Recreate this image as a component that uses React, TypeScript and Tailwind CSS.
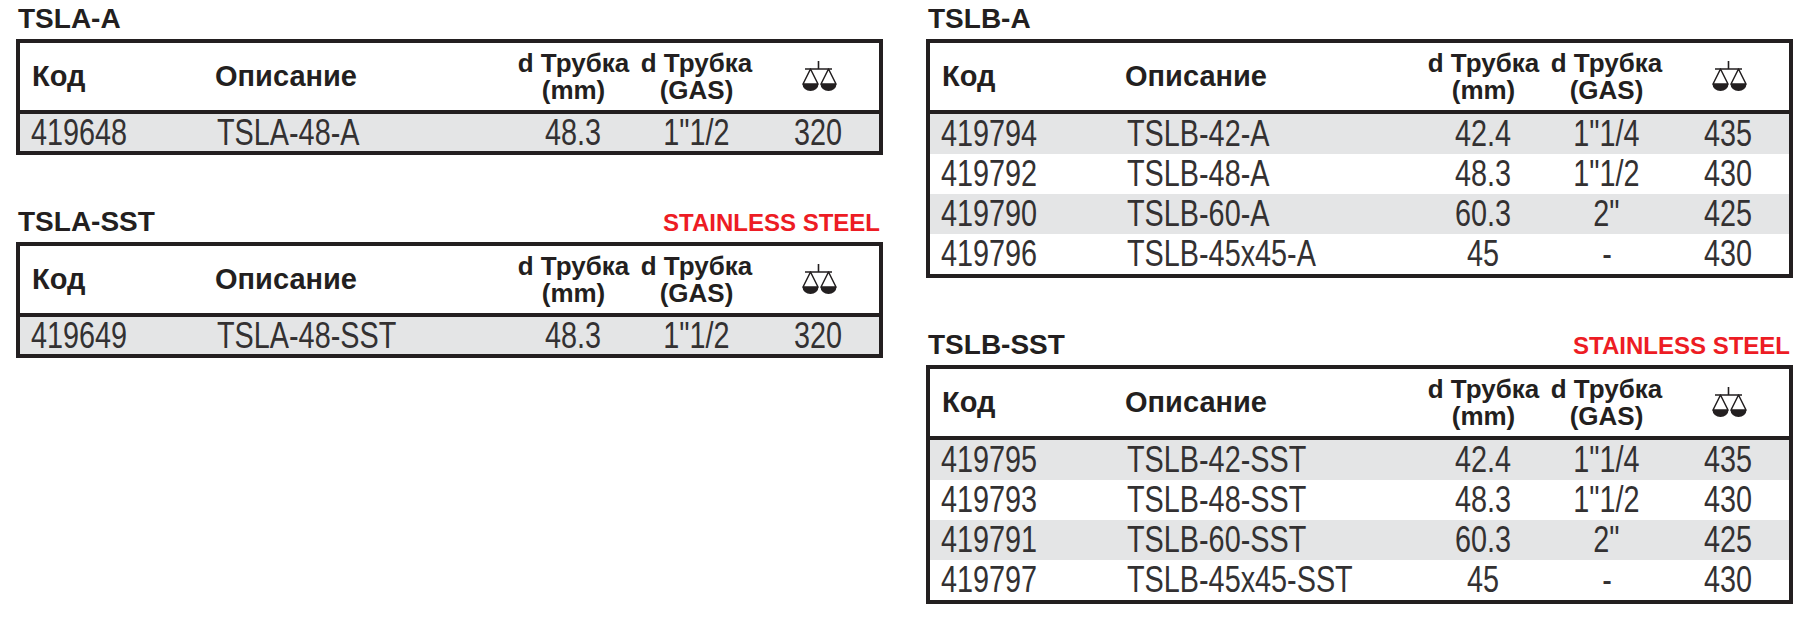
type Row = [string, string, string, string, string];

const tslaA: Row[] = [["419648", "TSLA-48-A", "48.3", "1\"1/2", "320"]];
const tslaSst: Row[] = [["419649", "TSLA-48-SST", "48.3", "1\"1/2", "320"]];
const tslbA: Row[] = [
  ["419794", "TSLB-42-A", "42.4", "1\"1/4", "435"],
  ["419792", "TSLB-48-A", "48.3", "1\"1/2", "430"],
  ["419790", "TSLB-60-A", "60.3", "2\"", "425"],
  ["419796", "TSLB-45x45-A", "45", "-", "430"],
];
const tslbSst: Row[] = [
  ["419795", "TSLB-42-SST", "42.4", "1\"1/4", "435"],
  ["419793", "TSLB-48-SST", "48.3", "1\"1/2", "430"],
  ["419791", "TSLB-60-SST", "60.3", "2\"", "425"],
  ["419797", "TSLB-45x45-SST", "45", "-", "430"],
];

const cols = "grid grid-cols-[183px_309px_123px_123px_121px]";

// condensed look: the catalogue face is narrow, so squeeze Liberation Sans
function Cell({ children, center }: { children: string; center?: boolean }) {
  return (
    <span
      className={`inline-block whitespace-nowrap scale-x-[0.8] ${
        center ? "origin-center" : "origin-left"
      }`}
    >
      {children}
    </span>
  );
}

function ScaleIcon() {
  return (
    <svg width="35" height="31" viewBox="0 0 35 31" fill="none">
      <path d="M16.5 0V8M3 8H30" stroke="#231f20" strokeWidth="1.6" />
      <path d="M8.5 8L1 23H16Z" stroke="#231f20" strokeWidth="1.5" strokeLinejoin="round" />
      <path d="M26.5 8L19 23H34Z" stroke="#231f20" strokeWidth="1.5" strokeLinejoin="round" />
      <path d="M0.5 23H16.5A8 7 0 0 1 0.5 23Z" fill="#231f20" />
      <path d="M18.5 23H34.5A8 7 0 0 1 18.5 23Z" fill="#231f20" />
    </svg>
  );
}

function PriceTable({ rows, rowH }: { rows: Row[]; rowH: string }) {
  return (
    <div className="border-[4px] border-[#231f20]">
      <div className={`${cols} h-[67px] items-center text-[#231f20] font-bold`}>
        <div className="pl-[12px] text-[29px]">Код</div>
        <div className="pl-[12px] text-[29px]">Описание</div>
        <div className="text-center text-[26px] leading-[27px] whitespace-nowrap">
          d Трубка
          <br />
          (mm)
        </div>
        <div className="text-center text-[26px] leading-[27px] whitespace-nowrap">
          d Трубка
          <br />
          (GAS)
        </div>
        <div className="flex justify-center pl-[2px]">
          <ScaleIcon />
        </div>
      </div>
      <div className="border-t-[4px] border-[#231f20]">
        {rows.map((r, i) => (
          <div
            key={r[0]}
            className={`${cols} ${rowH} items-center text-[36px] leading-none text-[#333132] ${
              i % 2 === 0 ? "bg-[#e4e5e6]" : "bg-white"
            }`}
          >
            <div className="pl-[11px]">
              <Cell>{r[0]}</Cell>
            </div>
            <div className="pl-[14px]">
              <Cell>{r[1]}</Cell>
            </div>
            <div className="text-center">
              <Cell center>{r[2]}</Cell>
            </div>
            <div className="text-center">
              <Cell center>{r[3]}</Cell>
            </div>
            <div className="text-center">
              <Cell center>{r[4]}</Cell>
            </div>
          </div>
        ))}
      </div>
    </div>
  );
}

function Section({
  title,
  rows,
  rowH,
  stainless,
  className = "",
}: {
  title: string;
  rows: Row[];
  rowH: string;
  stainless?: boolean;
  className?: string;
}) {
  return (
    <section className={className}>
      <div className="flex items-baseline justify-between h-[32px] mb-[4px] pl-[2px] pr-[3px]">
        <h2 className="text-[28px] leading-[32px] font-bold text-[#231f20]">{title}</h2>
        {stainless && (
          <span className="text-[24px] leading-[32px] font-bold text-[#ed1c24]">
            STAINLESS STEEL
          </span>
        )}
      </div>
      <PriceTable rows={rows} rowH={rowH} />
    </section>
  );
}

export default function App() {
  return (
    <div className="w-[1810px] h-[618px] bg-white pt-[3px] pl-[16px] flex gap-[43px] font-['Liberation_Sans',Arial,sans-serif]">
      <div className="w-[867px] flex flex-col">
        <Section title="TSLA-A" rows={tslaA} rowH="h-[37px]" />
        <Section title="TSLA-SST" rows={tslaSst} rowH="h-[37px]" stainless className="mt-[51px]" />
      </div>
      <div className="w-[867px] flex flex-col">
        <Section title="TSLB-A" rows={tslbA} rowH="h-[40px]" />
        <Section title="TSLB-SST" rows={tslbSst} rowH="h-[40px]" stainless className="mt-[51px]" />
      </div>
    </div>
  );
}
